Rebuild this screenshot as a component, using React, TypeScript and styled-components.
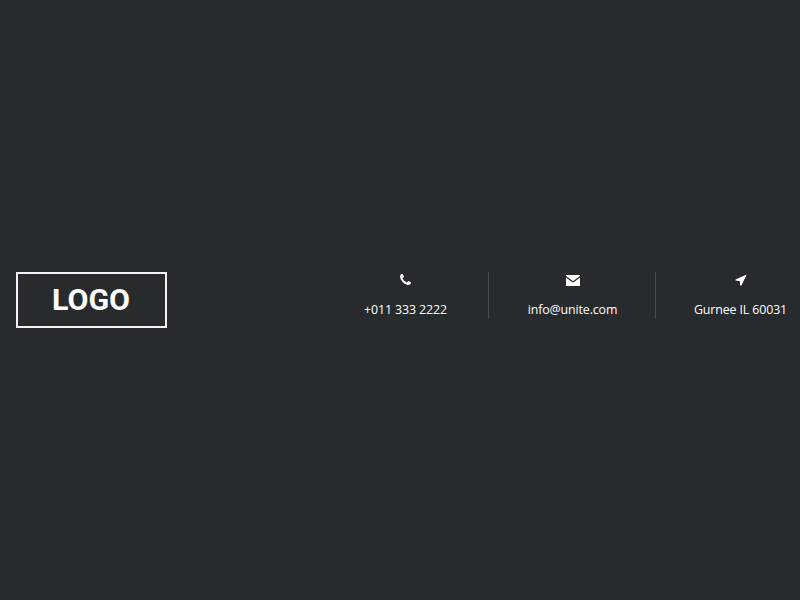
import React from "react";
import styled, { createGlobalStyle } from "styled-components";

const GlobalStyle = createGlobalStyle`
  * { box-sizing: border-box; }
  body { margin: 0; background: #282b2e; }
`;

const Page = styled.div`
  height: 100vh;
  overflow: hidden;
`;

const Header = styled.header`
  display: flex;
  align-items: flex-start;
  justify-content: space-between;
  width: 824px;
  height: 100vh;
  padding: 272px 0 0 16px;
`;

const Logo = styled.a`
  display: flex;
  align-items: center;
  justify-content: center;
  width: 151px;
  height: 56px;
  padding: 1px 1px 0 0;
  border: 2px solid #f4f4f5;
  color: #fff;
  font: 700 30.4px/1 Roboto, sans-serif;
`;

const ContactList = styled.ul`
  display: flex;
  margin: 0;
  padding: 0;
  list-style: none;
`;

const Contact = styled.li<{ $divided?: boolean }>`
  display: flex;
  flex-direction: column;
  align-items: center;
  width: ${(p) => (p.$divided ? "167px" : "168px")};
  height: 47px;
  padding-left: 1px;
  border-right: ${(p) => (p.$divided ? "1px solid #46494b" : "0")};
  color: #fff;
  font: 400 12.4px/18px "Open Sans", sans-serif;
  letter-spacing: -0.12px;
  white-space: nowrap;
`;

const Icon = styled.span`
  display: flex;
  flex-shrink: 0;
  align-items: center;
  height: 15px;
  margin-bottom: 14px;

  svg {
    display: block;
    fill: currentColor;
  }
`;

const PhoneIcon = () => (
  <svg width="11" height="11" viewBox="0 0 1408 1408">
    <path d="M1408 1112q0 27-10 70.5t-21 68.5q-21 50-122 106-94 51-186 51-27 0-52.5-3.5t-57.5-12.5-47.5-14.5-55.5-20.5-49-18q-98-35-175-83-128-79-264.5-215.5t-215.5-264.5q-48-77-83-175-3-9-18-49t-20.5-55.5-14.5-47.5-12.5-57.5-3.5-52.5q0-92 51-186 56-101 106-122 25-11 68.5-21t70.5-10q14 0 21 3 18 6 53 76 11 19 30 54t35 63.5 31 53.5q3 4 17.5 25t21.5 35.5 7 28.5q0 20-28.5 50t-62 55-62 53-28.5 46q0 9 5 22.5t8.5 20.5 14 24 11.5 19q76 137 174 235t235 174q2 1 19 11.5t24 14 20.5 8.5 22.5 5q18 0 46-28.5t53-62 55-62 50-28.5q14 0 28.5 7t35.5 21.5 25 17.5q25 15 53.5 31t63.5 35 54 30q70 35 76 53 3 7 3 21z" />
  </svg>
);

const MailIcon = () => (
  <svg width="14" height="13" viewBox="0 -2 14 13">
    <path d="M0 0H14V1.1L7.6 5.8Q7 6.2 6.4 5.8L0 1.1Z" />
    <path d="M0 2.6L5.9 6.9Q7 7.6 8.1 6.9L14 2.6V11H0Z" />
  </svg>
);

const ArrowIcon = () => (
  <svg width="12" height="12" viewBox="0 0 12 12">
    <path d="M11.7 0.4L6.3 11.7L4.9 11.3V7.3L0.5 6.5V5.5Z" />
  </svg>
);

export default function App() {
  return (
    <Page>
      <GlobalStyle />
      <Header>
        <Logo>LOGO</Logo>
        <ContactList>
          <Contact $divided>
            <Icon><PhoneIcon /></Icon>
            <span>+011 333 2222</span>
          </Contact>
          <Contact $divided>
            <Icon><MailIcon /></Icon>
            <span>info@unite.com</span>
          </Contact>
          <Contact>
            <Icon><ArrowIcon /></Icon>
            <span>Gurnee IL 60031</span>
          </Contact>
        </ContactList>
      </Header>
    </Page>
  );
}
